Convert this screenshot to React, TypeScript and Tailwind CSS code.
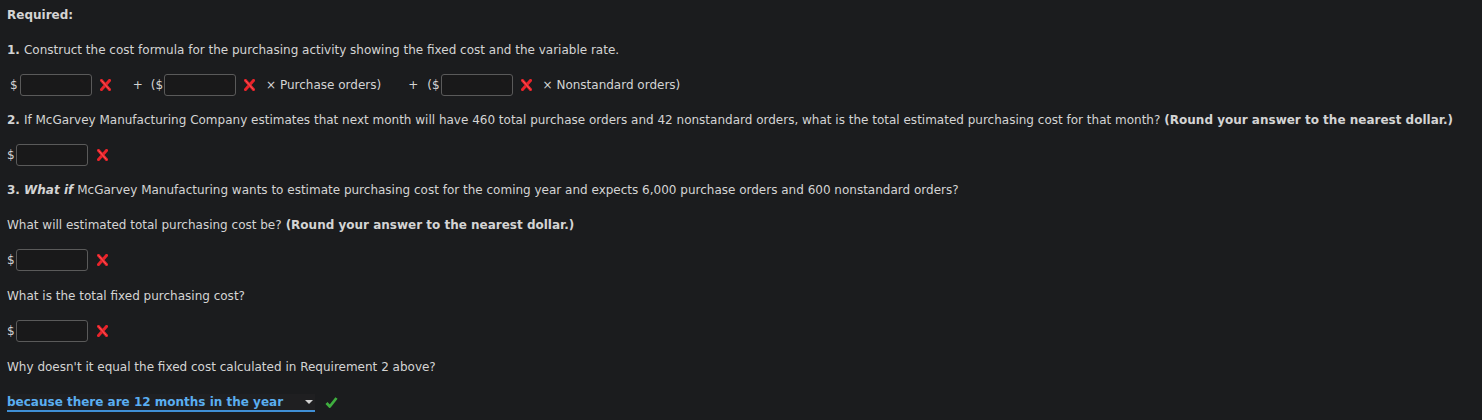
import React from "react";

function RedX() {
  return (
    <svg width="11" height="12" viewBox="0 0 11 12" className="shrink-0">
      <path d="M1.5 1.5 L9.5 10.5 M9.5 1.5 L1.5 10.5" stroke="#e8232a" strokeWidth="3" strokeLinecap="square" />
      <path d="M1.5 1.5 L9.5 10.5" stroke="#ff6b6b" strokeWidth="0.8" />
    </svg>
  );
}

function Check() {
  return (
    <svg width="13" height="13" viewBox="0 0 13 13" className="shrink-0">
      <path d="M1.5 7 L4.8 10.5 L11.5 2" fill="none" stroke="#3fae3f" strokeWidth="2.8" strokeLinejoin="round" />
    </svg>
  );
}

function Box({ className = "" }: { className?: string }) {
  return (
    <input
      type="text"
      className={`h-[22px] w-[72px] rounded-[3px] border border-[#5a5a5a] bg-[#19191a] px-1 text-[12px] text-[#d6d6d6] outline-none ${className}`}
    />
  );
}

function Money({ h }: { h: string }) {
  return (
    <div className={`flex items-center ${h}`}>
      <span>$</span>
      <Box className="ml-[1px]" />
      <span className="ml-[9px]">
        <RedX />
      </span>
    </div>
  );
}

export default function App() {
  return (
    <div
      className="min-h-[420px] w-full bg-[#1b1c1e] px-[7px] text-[12px] text-[#d4d4d4]"
      style={{ fontFamily: '"DejaVu Sans", Verdana, sans-serif' }}
    >
      <p className="flex h-[30px] items-center font-bold">Required:</p>

      <p className="flex h-[40px] items-center">
        <span className="mr-1 font-bold">1.</span>
        Construct the cost formula for the purchasing activity showing the fixed cost and the variable rate.
      </p>

      <div className="flex h-[30px] items-center pl-[3px]">
        <span>$</span>
        <Box className="ml-[2px]" />
        <span className="ml-[8px]">
          <RedX />
        </span>
        <span className="ml-[22px]">+</span>
        <span className="ml-[8px]">($</span>
        <Box className="ml-[1px]" />
        <span className="ml-[8px]">
          <RedX />
        </span>
        <span className="ml-[11px]">× Purchase orders)</span>
        <span className="ml-[27px]">+</span>
        <span className="ml-[9px]">($</span>
        <Box className="ml-[1px]" />
        <span className="ml-[8px]">
          <RedX />
        </span>
        <span className="ml-[11px]">× Nonstandard orders)</span>
      </div>

      <p className="flex h-[40px] items-center whitespace-nowrap">
        <span className="mr-1 font-bold">2.</span>
        If McGarvey Manufacturing Company estimates that next month will have 460 total purchase orders and 42 nonstandard orders, what is the total estimated purchasing cost for that month?
        <span className="ml-1 font-bold">(Round your answer to the nearest dollar.)</span>
      </p>

      <Money h="h-[30px]" />

      <p className="flex h-[40px] items-center">
        <span className="mr-1 font-bold">
          3. <em>What if</em>
        </span>
        McGarvey Manufacturing wants to estimate purchasing cost for the coming year and expects 6,000 purchase orders and 600 nonstandard orders?
      </p>

      <p className="flex h-[30px] items-center">
        What will estimated total purchasing cost be?
        <span className="ml-1 font-bold">(Round your answer to the nearest dollar.)</span>
      </p>

      <Money h="h-[40px]" />

      <p className="flex h-[32px] items-center">What is the total fixed purchasing cost?</p>

      <Money h="h-[38px]" />

      <p className="flex h-[34px] items-center">Why doesn't it equal the fixed cost calculated in Requirement 2 above?</p>

      <div className="flex h-[37px] items-center">
        <div className="relative flex h-[18px] w-[308px] items-center border-b-2 border-[#3f8fd6] bg-[#1f1f21]">
          <span className="font-bold text-[#5aaef0]">because there are 12 months in the year</span>
          <span className="absolute right-[2px] top-[6px] h-0 w-0 border-x-[4px] border-t-[4px] border-x-transparent border-t-[#d0d0d0]" />
        </div>
        <span className="ml-[10px]">
          <Check />
        </span>
      </div>
    </div>
  );
}
